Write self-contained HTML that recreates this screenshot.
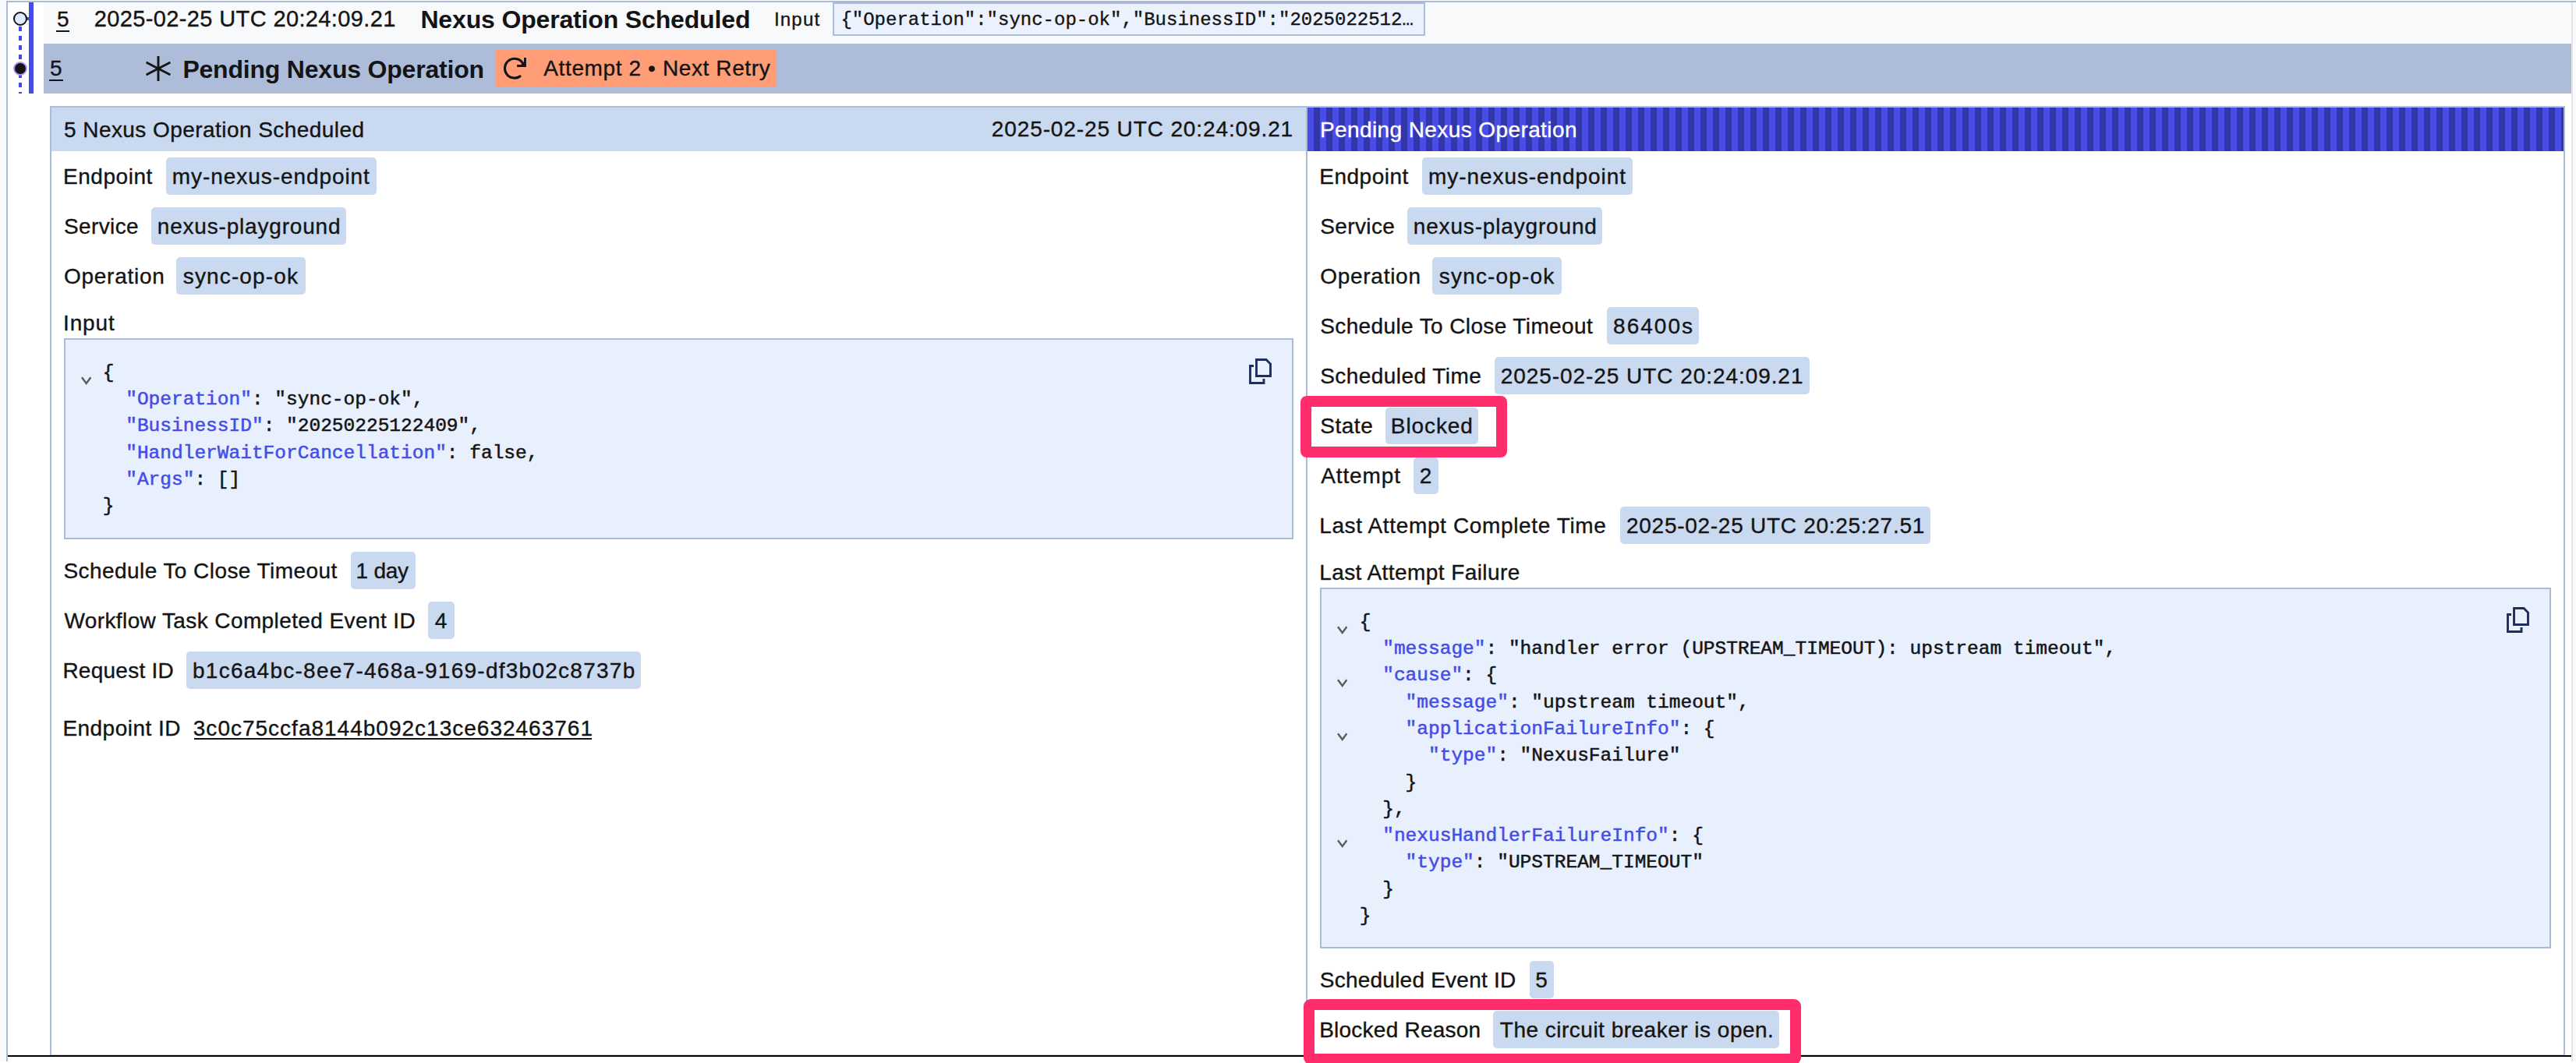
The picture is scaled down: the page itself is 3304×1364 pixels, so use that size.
<!DOCTYPE html>
<html><head><meta charset="utf-8"><style>
html,body{margin:0;padding:0;}
body{width:3304px;height:1364px;position:relative;overflow:hidden;background:#ffffff;font-family:'Liberation Sans', sans-serif;}
</style></head><body>
<div style="position:absolute;left:0px;top:0px;width:8px;height:1362px;background:#f8fafc"></div>
<div style="position:absolute;left:3300px;top:0px;width:4px;height:1362px;background:#fafafa"></div>
<div style="position:absolute;left:3298px;top:3px;width:2px;height:1359px;background:#e6e6e6"></div>
<div style="position:absolute;left:8px;top:1px;width:3296px;height:2px;background:#a9bbd9"></div>
<div style="position:absolute;left:8px;top:1px;width:2px;height:1361px;background:#a9bbd9"></div>
<div style="position:absolute;left:56px;top:3px;width:3242px;height:53px;background:#f8f9fb"></div>
<div style="position:absolute;left:56px;top:56px;width:3242px;height:64px;background:#adbdd9"></div>
<div style="position:absolute;left:37px;top:3px;width:6px;height:117px;background:#444ce7"></div>
<div style="position:absolute;left:34px;top:22px;width:3px;height:4px;background:#444ce7"></div>
<div style="position:absolute;left:24px;top:34px;width:4px;height:86px;background:repeating-linear-gradient(to bottom,#444ce7 0,#444ce7 6px,transparent 6px,transparent 12px)"></div>
<div style="position:absolute;left:17px;top:15px;width:14px;height:14px;border:2px solid #141414;border-radius:50%;background:#e0eaff"></div>
<div style="position:absolute;left:17px;top:79px;width:14px;height:14px;border:2px solid #b294f5;border-radius:50%;background:#141414"></div>
<div style="position:absolute;left:72px;top:39px;width:17px;height:2px;background:#141414"></div>
<div style="position:absolute;left:1068px;top:3px;width:760px;height:43px;background:#ebf1fd;border:2px solid #a9bbd9;box-sizing:border-box"></div>
<div style="position:absolute;left:63px;top:102px;width:18px;height:2px;background:#141414"></div>
<svg style="position:absolute;left:185px;top:71px" width="36" height="34" viewBox="0 0 36 34"><g stroke="#141414" stroke-width="2.9" fill="none"><line x1="18" y1="1" x2="18" y2="33"/><line x1="2.6" y1="9" x2="33.4" y2="25"/><line x1="2.6" y1="25" x2="33.4" y2="9"/></g></svg>
<div style="position:absolute;left:636px;top:64px;width:360px;height:48px;background:#ff9e76"></div>
<svg style="position:absolute;left:636px;top:64px" width="64" height="48" viewBox="0 0 64 48"><path d="M34.95 18.07 A12.4 12.4 0 1 0 31.0 33.86" stroke="#141414" stroke-width="3.1" stroke-linecap="round" fill="none"/><path d="M27.1 20.55 H37.45 V9.9" stroke="#141414" stroke-width="2.9" fill="none"/><path d="M31 20.5 L37.5 14 L37.5 20.5 Z" fill="#141414"/></svg>
<div style="position:absolute;left:64px;top:136px;width:3226px;height:2px;background:#adbfdb"></div>
<div style="position:absolute;left:64px;top:136px;width:2px;height:1220px;background:#a9bbd9"></div>
<div style="position:absolute;left:3288px;top:136px;width:2px;height:1220px;background:#a9bbd9"></div>
<div style="position:absolute;left:1675px;top:136px;width:2px;height:1220px;background:#a9bbd9"></div>
<div style="position:absolute;left:66px;top:138px;width:1609px;height:56px;background:#c9d9f0"></div>
<div style="position:absolute;left:1677px;top:138px;width:1611px;height:56px;background:repeating-linear-gradient(to right,#474de6 0,#474de6 8px,#3336a8 8px,#3336a8 16px)"></div>
<div style="position:absolute;left:10px;top:1354px;width:3288px;height:2px;background:#000"></div>
<div style="position:absolute;left:66px;top:1353px;width:3222px;height:1px;background:#c5d1e6"></div>
<div style="position:absolute;left:213px;top:202px;width:270px;height:47.5px;background:#c9d9f0;border-radius:5px"></div>
<div style="position:absolute;left:194px;top:266px;width:249.60000000000002px;height:47.5px;background:#c9d9f0;border-radius:5px"></div>
<div style="position:absolute;left:226px;top:330px;width:165.60000000000002px;height:47.5px;background:#c9d9f0;border-radius:5px"></div>
<div style="position:absolute;left:82px;top:434px;width:1577px;height:258px;background:#e8effd;border:2px solid #a9bbd9;box-sizing:border-box"></div>
<div style="position:absolute;left:449.8px;top:708px;width:82.90000000000003px;height:47.5px;background:#c9d9f0;border-radius:5px"></div>
<div style="position:absolute;left:549px;top:772px;width:33.700000000000045px;height:47.5px;background:#c9d9f0;border-radius:5px"></div>
<div style="position:absolute;left:239.2px;top:836px;width:583.2px;height:47.5px;background:#c9d9f0;border-radius:5px"></div>
<div style="position:absolute;left:248.8px;top:946.5px;width:510.59999999999997px;height:2.5px;background:#141414"></div>
<div style="position:absolute;left:1824.3px;top:202px;width:269.60000000000014px;height:47.5px;background:#c9d9f0;border-radius:5px"></div>
<div style="position:absolute;left:1805px;top:266px;width:250px;height:47.5px;background:#c9d9f0;border-radius:5px"></div>
<div style="position:absolute;left:1837px;top:330px;width:166px;height:47.5px;background:#c9d9f0;border-radius:5px"></div>
<div style="position:absolute;left:2061.3px;top:394px;width:117.39999999999964px;height:47.5px;background:#c9d9f0;border-radius:5px"></div>
<div style="position:absolute;left:1916.9px;top:458px;width:403.6999999999998px;height:47.5px;background:#c9d9f0;border-radius:5px"></div>
<div style="position:absolute;left:1777px;top:522.5px;width:119px;height:47.5px;background:#c9d9f0;border-radius:5px"></div>
<div style="position:absolute;left:1813px;top:586.5px;width:32px;height:47.5px;background:#c9d9f0;border-radius:5px"></div>
<div style="position:absolute;left:2078.2px;top:650px;width:398.2000000000003px;height:47.5px;background:#c9d9f0;border-radius:5px"></div>
<div style="position:absolute;left:1693px;top:754px;width:1579px;height:463px;background:#e8effd;border:2px solid #a9bbd9;box-sizing:border-box"></div>
<div style="position:absolute;left:1961.5px;top:1233px;width:31.799999999999955px;height:47.5px;background:#c9d9f0;border-radius:5px"></div>
<div style="position:absolute;left:1915px;top:1297px;width:366.8000000000002px;height:47.5px;background:#c9d9f0;border-radius:5px"></div>
<div style="position:absolute;left:131.8px;top:466.7px;font:24.5px/24px 'Liberation Mono', monospace;white-space:pre;color:#141414;-webkit-text-stroke:0.5px currentColor"><span style="color:#141414">{</span></div>
<svg style="position:absolute;left:103.5px;top:482.5px" width="14" height="12" viewBox="0 0 14 12"><path d="M1 1.2 L6.7 9 L12.4 1.2" stroke="#5c5c5c" stroke-width="2.4" fill="none"/></svg>
<div style="position:absolute;left:161.2px;top:501.0px;font:24.5px/24px 'Liberation Mono', monospace;white-space:pre;color:#141414;-webkit-text-stroke:0.5px currentColor"><span style="color:#444ce7">"Operation"</span><span style="color:#141414">: "sync-op-ok",</span></div>
<div style="position:absolute;left:161.2px;top:535.3px;font:24.5px/24px 'Liberation Mono', monospace;white-space:pre;color:#141414;-webkit-text-stroke:0.5px currentColor"><span style="color:#444ce7">"BusinessID"</span><span style="color:#141414">: "20250225122409",</span></div>
<div style="position:absolute;left:161.2px;top:569.6px;font:24.5px/24px 'Liberation Mono', monospace;white-space:pre;color:#141414;-webkit-text-stroke:0.5px currentColor"><span style="color:#444ce7">"HandlerWaitForCancellation"</span><span style="color:#141414">: false,</span></div>
<div style="position:absolute;left:161.2px;top:603.9px;font:24.5px/24px 'Liberation Mono', monospace;white-space:pre;color:#141414;-webkit-text-stroke:0.5px currentColor"><span style="color:#444ce7">"Args"</span><span style="color:#141414">: []</span></div>
<div style="position:absolute;left:131.8px;top:638.2px;font:24.5px/24px 'Liberation Mono', monospace;white-space:pre;color:#141414;-webkit-text-stroke:0.5px currentColor"><span style="color:#141414">}</span></div>
<div style="position:absolute;left:1743.8px;top:786.7px;font:24.5px/24px 'Liberation Mono', monospace;white-space:pre;color:#141414;-webkit-text-stroke:0.5px currentColor"><span style="color:#141414">{</span></div>
<svg style="position:absolute;left:1715px;top:802.5px" width="14" height="12" viewBox="0 0 14 12"><path d="M1 1.2 L6.7 9 L12.4 1.2" stroke="#5c5c5c" stroke-width="2.4" fill="none"/></svg>
<div style="position:absolute;left:1773.2px;top:821.0px;font:24.5px/24px 'Liberation Mono', monospace;white-space:pre;color:#141414;-webkit-text-stroke:0.5px currentColor"><span style="color:#444ce7">"message"</span><span style="color:#141414">: "handler error (UPSTREAM_TIMEOUT): upstream timeout",</span></div>
<div style="position:absolute;left:1773.2px;top:855.3px;font:24.5px/24px 'Liberation Mono', monospace;white-space:pre;color:#141414;-webkit-text-stroke:0.5px currentColor"><span style="color:#444ce7">"cause"</span><span style="color:#141414">: {</span></div>
<svg style="position:absolute;left:1715px;top:871.1px" width="14" height="12" viewBox="0 0 14 12"><path d="M1 1.2 L6.7 9 L12.4 1.2" stroke="#5c5c5c" stroke-width="2.4" fill="none"/></svg>
<div style="position:absolute;left:1802.6px;top:889.6px;font:24.5px/24px 'Liberation Mono', monospace;white-space:pre;color:#141414;-webkit-text-stroke:0.5px currentColor"><span style="color:#444ce7">"message"</span><span style="color:#141414">: "upstream timeout",</span></div>
<div style="position:absolute;left:1802.6px;top:923.9px;font:24.5px/24px 'Liberation Mono', monospace;white-space:pre;color:#141414;-webkit-text-stroke:0.5px currentColor"><span style="color:#444ce7">"applicationFailureInfo"</span><span style="color:#141414">: {</span></div>
<svg style="position:absolute;left:1715px;top:939.7px" width="14" height="12" viewBox="0 0 14 12"><path d="M1 1.2 L6.7 9 L12.4 1.2" stroke="#5c5c5c" stroke-width="2.4" fill="none"/></svg>
<div style="position:absolute;left:1832.0px;top:958.2px;font:24.5px/24px 'Liberation Mono', monospace;white-space:pre;color:#141414;-webkit-text-stroke:0.5px currentColor"><span style="color:#444ce7">"type"</span><span style="color:#141414">: "NexusFailure"</span></div>
<div style="position:absolute;left:1802.6px;top:992.5px;font:24.5px/24px 'Liberation Mono', monospace;white-space:pre;color:#141414;-webkit-text-stroke:0.5px currentColor"><span style="color:#141414">}</span></div>
<div style="position:absolute;left:1773.2px;top:1026.8px;font:24.5px/24px 'Liberation Mono', monospace;white-space:pre;color:#141414;-webkit-text-stroke:0.5px currentColor"><span style="color:#141414">},</span></div>
<div style="position:absolute;left:1773.2px;top:1061.1px;font:24.5px/24px 'Liberation Mono', monospace;white-space:pre;color:#141414;-webkit-text-stroke:0.5px currentColor"><span style="color:#444ce7">"nexusHandlerFailureInfo"</span><span style="color:#141414">: {</span></div>
<svg style="position:absolute;left:1715px;top:1076.9px" width="14" height="12" viewBox="0 0 14 12"><path d="M1 1.2 L6.7 9 L12.4 1.2" stroke="#5c5c5c" stroke-width="2.4" fill="none"/></svg>
<div style="position:absolute;left:1802.6px;top:1095.4px;font:24.5px/24px 'Liberation Mono', monospace;white-space:pre;color:#141414;-webkit-text-stroke:0.5px currentColor"><span style="color:#444ce7">"type"</span><span style="color:#141414">: "UPSTREAM_TIMEOUT"</span></div>
<div style="position:absolute;left:1773.2px;top:1129.7px;font:24.5px/24px 'Liberation Mono', monospace;white-space:pre;color:#141414;-webkit-text-stroke:0.5px currentColor"><span style="color:#141414">}</span></div>
<div style="position:absolute;left:1743.8px;top:1164.0px;font:24.5px/24px 'Liberation Mono', monospace;white-space:pre;color:#141414;-webkit-text-stroke:0.5px currentColor"><span style="color:#141414">}</span></div>
<svg style="position:absolute;left:1602px;top:460px" width="30" height="34" viewBox="0 0 30 34"><g fill="none" stroke="#1e2f5c" stroke-width="2.9" stroke-linecap="butt" stroke-linejoin="miter"><path d="M9.5 1.5 H22 L27.5 7 V22.5 H9.5 Z"/><path d="M6 9.5 H1.5 V31.5 H19 V26"/></g></svg>
<svg style="position:absolute;left:3215px;top:779px" width="30" height="34" viewBox="0 0 30 34"><g fill="none" stroke="#1e2f5c" stroke-width="2.9" stroke-linecap="butt" stroke-linejoin="miter"><path d="M9.5 1.5 H22 L27.5 7 V22.5 H9.5 Z"/><path d="M6 9.5 H1.5 V31.5 H19 V26"/></g></svg>
<div style="position:absolute;left:1668px;top:508px;width:265px;height:78.5px;border:14px solid #ff2d6c;border-radius:8px;box-sizing:border-box"></div>
<div style="position:absolute;left:1672px;top:1281.5px;width:638px;height:84px;border:14px solid #ff2d6c;border-radius:9px;box-sizing:border-box"></div>
<div style="position:absolute;left:73.00px;top:11.20px;font:400 28px/28px 'Liberation Sans', sans-serif;letter-spacing:0.000px;color:#141414;white-space:pre;-webkit-text-stroke:0.35px currentColor">5</div>
<div style="position:absolute;left:120.80px;top:9.85px;font:400 29px/29px 'Liberation Sans', sans-serif;letter-spacing:0.371px;color:#141414;white-space:pre;-webkit-text-stroke:0.35px currentColor">2025-02-25 UTC 20:24:09.21</div>
<div style="position:absolute;left:539.40px;top:9.00px;font:700 32px/32px 'Liberation Sans', sans-serif;letter-spacing:-0.155px;color:#141414;white-space:pre">Nexus Operation Scheduled</div>
<div style="position:absolute;left:993.00px;top:13.25px;font:400 24px/24px 'Liberation Sans', sans-serif;letter-spacing:1.172px;color:#141414;white-space:pre;-webkit-text-stroke:0.35px currentColor">Input</div>
<div style="position:absolute;left:1078.40px;top:14.25px;font:400 24px/24px 'Liberation Mono', monospace;letter-spacing:-0.002px;color:#141414;white-space:pre;-webkit-text-stroke:0.35px currentColor">{"Operation":"sync-op-ok","BusinessID":"2025022512…</div>
<div style="position:absolute;left:64.10px;top:74.15px;font:400 28px/28px 'Liberation Sans', sans-serif;letter-spacing:0.000px;color:#141414;white-space:pre;-webkit-text-stroke:0.35px currentColor">5</div>
<div style="position:absolute;left:234.40px;top:72.70px;font:700 32px/32px 'Liberation Sans', sans-serif;letter-spacing:-0.206px;color:#141414;white-space:pre">Pending Nexus Operation</div>
<div style="position:absolute;left:697.30px;top:74.40px;font:400 28px/28px 'Liberation Sans', sans-serif;letter-spacing:0.617px;color:#141414;white-space:pre;-webkit-text-stroke:0.35px currentColor">Attempt 2 • Next Retry</div>
<div style="position:absolute;left:82.00px;top:152.60px;font:400 28px/28px 'Liberation Sans', sans-serif;letter-spacing:0.439px;color:#141414;white-space:pre;-webkit-text-stroke:0.35px currentColor">5 Nexus Operation Scheduled</div>
<div style="position:absolute;left:1271.80px;top:152.40px;font:400 28px/28px 'Liberation Sans', sans-serif;letter-spacing:0.885px;color:#141414;white-space:pre;-webkit-text-stroke:0.35px currentColor">2025-02-25 UTC 20:24:09.21</div>
<div style="position:absolute;left:1692.90px;top:152.55px;font:400 28px/28px 'Liberation Sans', sans-serif;letter-spacing:0.406px;color:#ffffff;white-space:pre;-webkit-text-stroke:0.35px currentColor">Pending Nexus Operation</div>
<div style="position:absolute;left:81.00px;top:212.75px;font:400 28px/28px 'Liberation Sans', sans-serif;letter-spacing:0.549px;color:#141414;white-space:pre;-webkit-text-stroke:0.35px currentColor">Endpoint</div>
<div style="position:absolute;left:220.80px;top:212.75px;font:400 28px/28px 'Liberation Sans', sans-serif;letter-spacing:0.935px;color:#141414;white-space:pre;-webkit-text-stroke:0.35px currentColor">my-nexus-endpoint</div>
<div style="position:absolute;left:82.00px;top:276.75px;font:400 28px/28px 'Liberation Sans', sans-serif;letter-spacing:0.385px;color:#141414;white-space:pre;-webkit-text-stroke:0.35px currentColor">Service</div>
<div style="position:absolute;left:201.80px;top:276.75px;font:400 28px/28px 'Liberation Sans', sans-serif;letter-spacing:0.805px;color:#141414;white-space:pre;-webkit-text-stroke:0.35px currentColor">nexus-playground</div>
<div style="position:absolute;left:82.00px;top:340.75px;font:400 28px/28px 'Liberation Sans', sans-serif;letter-spacing:0.726px;color:#141414;white-space:pre;-webkit-text-stroke:0.35px currentColor">Operation</div>
<div style="position:absolute;left:234.80px;top:340.75px;font:400 28px/28px 'Liberation Sans', sans-serif;letter-spacing:1.129px;color:#141414;white-space:pre;-webkit-text-stroke:0.35px currentColor">sync-op-ok</div>
<div style="position:absolute;left:81.00px;top:400.70px;font:400 28px/28px 'Liberation Sans', sans-serif;letter-spacing:0.876px;color:#141414;white-space:pre;-webkit-text-stroke:0.35px currentColor">Input</div>
<div style="position:absolute;left:81.40px;top:718.75px;font:400 28px/28px 'Liberation Sans', sans-serif;letter-spacing:0.442px;color:#141414;white-space:pre;-webkit-text-stroke:0.35px currentColor">Schedule To Close Timeout</div>
<div style="position:absolute;left:456.60px;top:718.75px;font:400 28px/28px 'Liberation Sans', sans-serif;letter-spacing:-0.274px;color:#141414;white-space:pre;-webkit-text-stroke:0.35px currentColor">1 day</div>
<div style="position:absolute;left:82.40px;top:782.75px;font:400 28px/28px 'Liberation Sans', sans-serif;letter-spacing:0.404px;color:#141414;white-space:pre;-webkit-text-stroke:0.35px currentColor">Workflow Task Completed Event ID</div>
<div style="position:absolute;left:557.80px;top:782.75px;font:400 28px/28px 'Liberation Sans', sans-serif;letter-spacing:0.000px;color:#141414;white-space:pre;-webkit-text-stroke:0.35px currentColor">4</div>
<div style="position:absolute;left:80.40px;top:846.75px;font:400 28px/28px 'Liberation Sans', sans-serif;letter-spacing:0.250px;color:#141414;white-space:pre;-webkit-text-stroke:0.35px currentColor">Request ID</div>
<div style="position:absolute;left:247.00px;top:846.75px;font:400 28px/28px 'Liberation Sans', sans-serif;letter-spacing:1.262px;color:#141414;white-space:pre;-webkit-text-stroke:0.35px currentColor">b1c6a4bc-8ee7-468a-9169-df3b02c8737b</div>
<div style="position:absolute;left:80.40px;top:921.10px;font:400 28px/28px 'Liberation Sans', sans-serif;letter-spacing:0.470px;color:#141414;white-space:pre;-webkit-text-stroke:0.35px currentColor">Endpoint ID</div>
<div style="position:absolute;left:247.80px;top:921.10px;font:400 28px/28px 'Liberation Sans', sans-serif;letter-spacing:1.003px;color:#141414;white-space:pre;-webkit-text-stroke:0.35px currentColor">3c0c75ccfa8144b092c13ce632463761</div>
<div style="position:absolute;left:1692.20px;top:212.75px;font:400 28px/28px 'Liberation Sans', sans-serif;letter-spacing:0.520px;color:#141414;white-space:pre;-webkit-text-stroke:0.35px currentColor">Endpoint</div>
<div style="position:absolute;left:1832.10px;top:212.75px;font:400 28px/28px 'Liberation Sans', sans-serif;letter-spacing:0.922px;color:#141414;white-space:pre;-webkit-text-stroke:0.35px currentColor">my-nexus-endpoint</div>
<div style="position:absolute;left:1693.20px;top:276.75px;font:400 28px/28px 'Liberation Sans', sans-serif;letter-spacing:0.385px;color:#141414;white-space:pre;-webkit-text-stroke:0.35px currentColor">Service</div>
<div style="position:absolute;left:1812.80px;top:276.75px;font:400 28px/28px 'Liberation Sans', sans-serif;letter-spacing:0.832px;color:#141414;white-space:pre;-webkit-text-stroke:0.35px currentColor">nexus-playground</div>
<div style="position:absolute;left:1693.20px;top:340.75px;font:400 28px/28px 'Liberation Sans', sans-serif;letter-spacing:0.726px;color:#141414;white-space:pre;-webkit-text-stroke:0.35px currentColor">Operation</div>
<div style="position:absolute;left:1845.80px;top:340.75px;font:400 28px/28px 'Liberation Sans', sans-serif;letter-spacing:1.174px;color:#141414;white-space:pre;-webkit-text-stroke:0.35px currentColor">sync-op-ok</div>
<div style="position:absolute;left:1693.20px;top:404.75px;font:400 28px/28px 'Liberation Sans', sans-serif;letter-spacing:0.384px;color:#141414;white-space:pre;-webkit-text-stroke:0.35px currentColor">Schedule To Close Timeout</div>
<div style="position:absolute;left:2069.10px;top:404.75px;font:400 28px/28px 'Liberation Sans', sans-serif;letter-spacing:2.008px;color:#141414;white-space:pre;-webkit-text-stroke:0.35px currentColor">86400s</div>
<div style="position:absolute;left:1693.20px;top:468.75px;font:400 28px/28px 'Liberation Sans', sans-serif;letter-spacing:0.452px;color:#141414;white-space:pre;-webkit-text-stroke:0.35px currentColor">Scheduled Time</div>
<div style="position:absolute;left:1924.70px;top:468.75px;font:400 28px/28px 'Liberation Sans', sans-serif;letter-spacing:0.941px;color:#141414;white-space:pre;-webkit-text-stroke:0.35px currentColor">2025-02-25 UTC 20:24:09.21</div>
<div style="position:absolute;left:1693.20px;top:533.25px;font:400 28px/28px 'Liberation Sans', sans-serif;letter-spacing:0.548px;color:#141414;white-space:pre;-webkit-text-stroke:0.35px currentColor">State</div>
<div style="position:absolute;left:1783.80px;top:533.25px;font:400 28px/28px 'Liberation Sans', sans-serif;letter-spacing:0.910px;color:#141414;white-space:pre;-webkit-text-stroke:0.35px currentColor">Blocked</div>
<div style="position:absolute;left:1694.20px;top:597.25px;font:400 28px/28px 'Liberation Sans', sans-serif;letter-spacing:0.883px;color:#141414;white-space:pre;-webkit-text-stroke:0.35px currentColor">Attempt</div>
<div style="position:absolute;left:1820.80px;top:597.25px;font:400 28px/28px 'Liberation Sans', sans-serif;letter-spacing:0.000px;color:#141414;white-space:pre;-webkit-text-stroke:0.35px currentColor">2</div>
<div style="position:absolute;left:1692.20px;top:660.75px;font:400 28px/28px 'Liberation Sans', sans-serif;letter-spacing:0.640px;color:#141414;white-space:pre;-webkit-text-stroke:0.35px currentColor">Last Attempt Complete Time</div>
<div style="position:absolute;left:2086.00px;top:660.75px;font:400 28px/28px 'Liberation Sans', sans-serif;letter-spacing:0.721px;color:#141414;white-space:pre;-webkit-text-stroke:0.35px currentColor">2025-02-25 UTC 20:25:27.51</div>
<div style="position:absolute;left:1692.20px;top:721.20px;font:400 28px/28px 'Liberation Sans', sans-serif;letter-spacing:0.427px;color:#141414;white-space:pre;-webkit-text-stroke:0.35px currentColor">Last Attempt Failure</div>
<div style="position:absolute;left:1692.80px;top:1243.75px;font:400 28px/28px 'Liberation Sans', sans-serif;letter-spacing:0.231px;color:#141414;white-space:pre;-webkit-text-stroke:0.35px currentColor">Scheduled Event ID</div>
<div style="position:absolute;left:1969.30px;top:1243.75px;font:400 28px/28px 'Liberation Sans', sans-serif;letter-spacing:0.000px;color:#141414;white-space:pre;-webkit-text-stroke:0.35px currentColor">5</div>
<div style="position:absolute;left:1692.20px;top:1307.75px;font:400 28px/28px 'Liberation Sans', sans-serif;letter-spacing:0.236px;color:#141414;white-space:pre;-webkit-text-stroke:0.35px currentColor">Blocked Reason</div>
<div style="position:absolute;left:1923.80px;top:1307.75px;font:400 28px/28px 'Liberation Sans', sans-serif;letter-spacing:0.495px;color:#141414;white-space:pre;-webkit-text-stroke:0.35px currentColor">The circuit breaker is open.</div>
</body></html>
